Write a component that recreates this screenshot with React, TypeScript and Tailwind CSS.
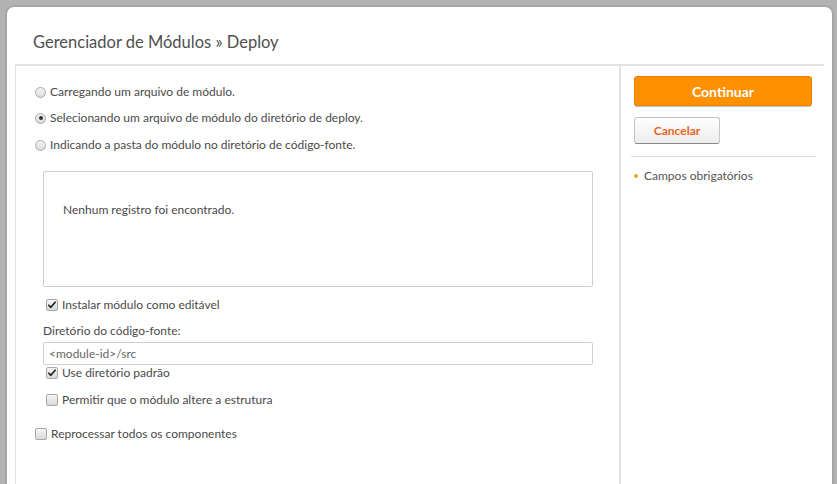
import * as React from "react";

const font = { fontFamily: 'Lato, "Open Sans", Arial, sans-serif' };

function Radio({ checked }: { checked?: boolean }) {
  return (
    <span className="relative inline-block h-[11px] w-[11px] shrink-0 rounded-full border border-[#a8a8a8] bg-gradient-to-b from-[#f4f4f4] to-[#dcdcdc]">
      {checked && <span className="absolute left-[2.5px] top-[2.5px] h-[4px] w-[4px] rounded-full bg-[#333]" />}
    </span>
  );
}

function Check({ checked }: { checked?: boolean }) {
  return (
    <span className="relative inline-flex h-[12px] w-[12px] shrink-0 items-center justify-center rounded-[2px] border border-[#a8a8a8] bg-gradient-to-b from-[#f6f6f6] to-[#dadada]">
      {checked && (
        <svg viewBox="0 0 12 12" className="h-[10px] w-[10px]" aria-hidden="true">
          <path d="M2.2 6.3l2.4 2.5L9.8 2.6" fill="none" stroke="#222" strokeWidth="2" strokeLinecap="round" strokeLinejoin="round" />
        </svg>
      )}
    </span>
  );
}

function RadioRow({ checked, children }: { checked?: boolean; children: React.ReactNode }) {
  return (
    <div className="flex h-[26px] items-center gap-[4px]">
      <Radio checked={checked} />
      <span>{children}</span>
    </div>
  );
}

function CheckRow({ checked, children }: { checked?: boolean; children: React.ReactNode }) {
  return (
    <div className="flex h-[16px] items-center gap-[4px]">
      <Check checked={checked} />
      <span>{children}</span>
    </div>
  );
}

export default function App() {
  return (
    <div className="h-[484px] w-[837px] overflow-hidden bg-[#b3b3b3] pl-[5px] pr-[3px] pt-[5px]" style={font}>
      <div className="flex h-full flex-col rounded-t-[9px] border-2 border-b-0 border-[#a6a6a6] bg-white">
        <div className="flex h-[57px] shrink-0 items-center pl-[26px] pt-[14px] text-[16.5px] text-[#505050]">
          Gerenciador de Módulos » Deploy
        </div>
        <div className="flex flex-1 bg-white pl-[8px] pr-[8px]">
          <div className="flex flex-1 border-l border-t-2 border-[#e2e2e2]">
            <div className="w-[605px] shrink-0 border-r-2 border-[#e4e4e4] pl-[19px] pr-[26px] pt-[13px] text-[12px] leading-[16px] text-[#4a4a4a]">
              <RadioRow>Carregando um arquivo de módulo.</RadioRow>
              <RadioRow checked>Selecionando um arquivo de módulo do diretório de deploy.</RadioRow>
              <div className="flex h-[27px] items-center gap-[4px] pt-[1px]">
                <Radio />
                <span>Indicando a pasta do módulo no diretório de código-fonte.</span>
              </div>
              <div className="pl-[8px]">
                <div className="mt-[13px] h-[116px] rounded-[2px] border border-[#cfcfcf] pl-[19px] pt-[30px]">
                  Nenhum registro foi encontrado.
                </div>
                <div className="mt-[10px] pl-[3px]">
                  <CheckRow checked>Instalar módulo como editável</CheckRow>
                </div>
                <div className="mt-[10px]">Diretório do código-fonte:</div>
                <div className="mt-[3px] flex h-[23px] items-center rounded-[2px] border border-[#cfcfcf] pl-[5px] text-[#666]">
                  &lt;module-id&gt;/src
                </div>
                <div className="pl-[3px]">
                  <CheckRow checked>Use diretório padrão</CheckRow>
                </div>
                <div className="mt-[11px] pl-[3px]">
                  <CheckRow>Permitir que o módulo altere a estrutura</CheckRow>
                </div>
              </div>
              <div className="mt-[18px]">
                <CheckRow>Reprocessar todos os componentes</CheckRow>
              </div>
            </div>
            <div className="flex-1 pl-[13px] pr-[8px] pt-[10px]">
              <button className="flex h-[30px] w-[178px] items-center justify-center rounded-[3px] border border-[#e98200] bg-[#ff9000] text-[14px] font-bold text-white shadow-[0_1px_1px_rgba(0,0,0,0.25)]">
                Continuar
              </button>
              <button className="mt-[11px] flex h-[27px] w-[86px] items-center justify-center rounded-[3px] border border-[#c4c4c4] border-b-[#8a8a8a] bg-gradient-to-b from-white to-[#ececec] text-[12px] font-bold text-[#e8651e]">
                Cancelar
              </button>
              <div className="ml-[-3px] mt-[12px] border-t border-[#dcdcdc]" />
              <div className="mt-[10px] flex items-center gap-[6px] text-[12px] text-[#555]">
                <span className="h-[4px] w-[4px] rounded-full bg-[#f0a030]" />
                <span>Campos obrigatórios</span>
              </div>
            </div>
          </div>
        </div>
      </div>
    </div>
  );
}
